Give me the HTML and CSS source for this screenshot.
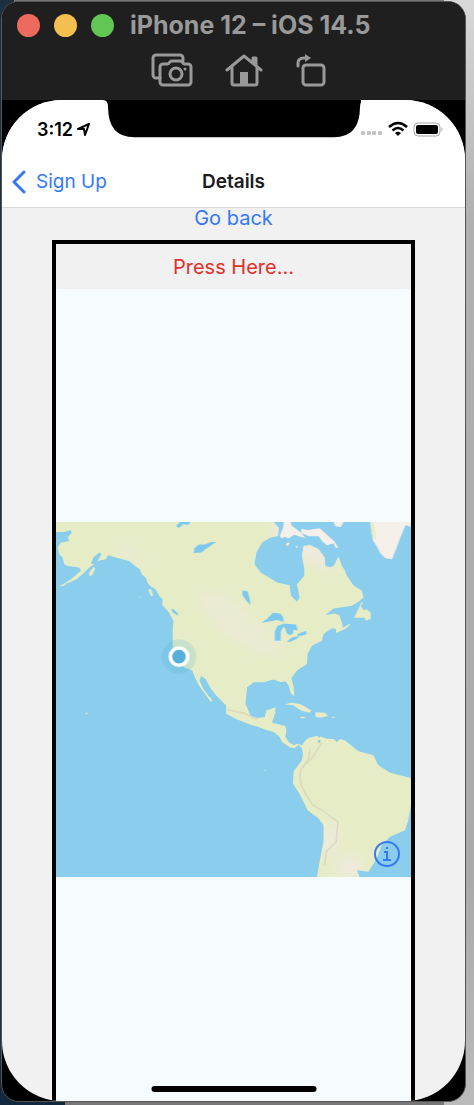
FILE: index.html
```
<!DOCTYPE html>
<html lang="en">
<head>
    <meta charset="UTF-8">
    <meta name="viewport" content="width=device-width, initial-scale=1.0">
    <title>Details</title>
    <link rel="stylesheet" href="styles.css">
</head>
<body>
    <div class="simulator">
        <header class="titlebar">
            <div class="title-row">
                <div class="lights">
                    <button class="light red" aria-label="Close"></button>
                    <button class="light yellow" aria-label="Minimize"></button>
                    <button class="light green" aria-label="Zoom"></button>
                </div>
                <h1>iPhone 12 – iOS 14.5</h1>
            </div>
            <div class="tools">
                <button aria-label="Screenshot">
                    <svg width="40" height="34" viewBox="0 0 40 34">
                        <path d="M8 24H4a3 3 0 0 1-3-3V4a3 3 0 0 1 3-3h24a3 3 0 0 1 3 3v3"/>
                        <path d="M11 10h5l3-3h10l3 3h4a3 3 0 0 1 3 3v15a3 3 0 0 1-3 3H11a3 3 0 0 1-3-3V13a3 3 0 0 1 3-3z"/>
                        <circle cx="24" cy="20" r="6"/>
                        <circle cx="33" cy="15" r="1.5" class="solid"/>
                    </svg>
                </button>
                <button aria-label="Home">
                    <svg width="36" height="34" viewBox="0 0 36 34">
                        <path d="M1 16L18 2l17 14M6 13v16a2 2 0 0 0 2 2h21a2 2 0 0 0 2-2V13M27 9V4h3v7"/>
                        <path d="M14 31V18h8v13z" class="solid"/>
                    </svg>
                </button>
                <button aria-label="Rotate">
                    <svg width="30" height="34" viewBox="0 0 30 34">
                        <rect x="7" y="11" width="21" height="20" rx="3"/>
                        <path d="M2 12V9q0-5 6-5h3"/>
                        <path d="M9 0l6 4-6 4z" class="solid"/>
                    </svg>
                </button>
            </div>
        </header>

        <div class="device">
            <div class="screen">
                <div class="notch">
                    <svg viewBox="0 0 256 38"><path d="M0 0q5 0 5 7 0 30 26 30h198q26 0 26-30 0-7 5-7z"/></svg>
                </div>
                <div class="status">
                    <div class="time">
                        <span>3:12</span>
                        <svg width="13" height="13" viewBox="0 0 13 13"><path d="M1 6L12 1 8 12 7 6z"/></svg>
                    </div>
                    <div class="signals">
                        <svg width="22" height="16" viewBox="0 0 22 16" fill="#c4c4c4">
                            <rect x="0" y="10" width="4" height="4" rx="1"/><rect x="6" y="10" width="4" height="4" rx="1"/>
                            <rect x="11" y="10" width="4" height="4" rx="1"/><rect x="17" y="10" width="4" height="4" rx="1"/>
                        </svg>
                        <svg width="20" height="16" viewBox="0 0 20 16" fill="none" stroke="#000" stroke-width="2.6">
                            <path d="M1 6q9-8 18 0M4.500 9.500q5.500-5 11 0"/>
                            <path d="M7 12q3-2.500 6 0l-3 3z" fill="#000" stroke="none"/>
                        </svg>
                        <svg width="30" height="16" viewBox="0 0 30 16">
                            <rect x="1" y="2" width="26" height="13" rx="4" fill="#fff" stroke="#a5a5a5"/>
                            <rect x="3" y="4" width="22" height="9" rx="2"/>
                            <path d="M28.500 6q2 2.500 0 5z" fill="#a5a5a5"/>
                        </svg>
                    </div>
                </div>
                <nav class="navbar">
                    <a href="#" class="back">
                        <svg width="14" height="24" viewBox="0 0 14 24"><path d="M12 2L2 12l10 10"/></svg>
                        Sign Up
                    </a>
                    <h2>Details</h2>
                </nav>
                <main>
                    <button class="go-back">Go back</button>
                    <section class="card">
                        <button class="press">Press Here...</button>
                        <div class="map-area">
                            <div class="map">
                                <svg viewBox="0 0 1068 1068" role="img" aria-label="Map of the Americas">
                                    <defs>
                                        <filter id="soft" x="-50%" y="-50%" width="200%" height="200%"><feGaussianBlur stdDeviation="18"/></filter>
                                        <clipPath id="land">
                                            <path d="M0 0H655L670 18 668 42 645 47 620 62 603 92 597 127 605 138 616 152 665 182 703 190 707 222 725 240 733 227 725 187 747 162 747 142 740 102 745 72 765 70 790 82 808 107 810 132 824 136 835 132 850 104 860 132 868 144 875 162 895 190 920 207 925 227 910 240 890 252 835 260 810 280 838 275 852 280 860 302 863 318 882 307 886 308 870 322 843 334 842 322 830 320 805 337 800 357 770 372 757 396 755 427 725 447 708 470 715 497 717 522 707 517 700 492 690 479 675 482 655 474 625 482 595 482 575 497 570 547 585 582 605 590 628 587 633 567 660 557 660 572 650 604 690 614 693 627 690 647 700 662 715 672 725 667 740 672 750 657 760 650 787 643 791 650 795 645 815 652 835 653 845 662 855 653 870 657 910 690 955 702 970 732 1005 754 1068 770V852L1060 897 1050 927 1005 947 980 972 965 1012 940 1052 905 1047 913 1068H785L793 1022 805 962 805 912 790 892 757 867 735 822 713 787 715 750 740 717 743 697 739 680 730 671 718 680 705 679 680 662 673 647 655 632 630 625 610 617 585 610 540 592 512 577 512 552 482 522 465 500 450 472 436 463 432 477 442 500 456 520 470 540 465 540 450 520 443 510 430 492 420 472 410 447 385 437 370 412 351 380V327L353 297 340 272 320 250 320 232 310 222 300 202 285 194 275 182 270 168 258 157 252 142 240 134 220 117 200 112 180 107 157 100 150 112 125 117 137 97 130 92 112 107 105 125 115 127 100 137 85 152 62 172 40 182 0 196 20 188 45 172 65 155 75 147 70 137 35 132 25 127 20 107 10 97 5 77 15 62 40 57 35 47 47 32 45 24 25 30H0z"/>
                                        </clipPath>
                                    </defs>
                                    <rect width="1068" height="1068" fill="#8bcdec"/>
                                    <g clip-path="url(#land)">
                                        <rect width="1068" height="1068" fill="#e6edc6"/>
                                        <g fill="#efe9df" filter="url(#soft)">
                                            <path d="M170 90l45-25 50 40-5 35zM420 210l80 0 80 60 90 80 20 60-70-10-100-50-80-80z" opacity=".5"/>
                                            <path d="M655 0h120v70l60 20-10 60-60-30-110-60zM810 900l40 20-10 70-45 30zM850 1010l60-10 20 68h-90z"/>
                                        </g>
                                        <path d="M765 682l-5 30-22 30-5 25 5 25 15 30 20 30 35 20 40 30-5 60-30 30-5 40M800 665l-30 45-30 30M515 565l50 10 40 20" fill="none" stroke="#d5d1ba" stroke-width="5" opacity=".7"/>
                                    </g>
                                    <!-- islands -->
                                    <g fill="#e6edc6">
                                        <path d="M98 155l15-20 5 6-8 18-8 4zM277 202l10 0 5 20-6 2zM338 262l12 7 17 12-2 4-20-9zM455 523l10 5 6 12-8-4zM13 191l13-6 4 3-12 6z"/>
                                        <path d="M920 240l-15 30-8 18 30 0 7 9 10-6 2 7 1-25-12-10-10 2-8-12 6-9z"/>
                                        <path d="M688 549l20-6 30 6 30 18-5 7-25-6-25-17zM780 572l30 2 8 10-22 5-15-2zM734 587l15-1 1 4-12 1zM830 586l10 0 0 3-10 0z"/>
                                        <path d="M710 520l10 2-8 0zM88 575l5-3 2 4-5 2z"/>
                                    </g>
                                    <g fill="#f4f0e9">
                                        <path d="M673 42l10-25 2-17h20l5 12 25 18 16 18-16-4-18-6-18 12-10-6-10 6zM738 20l20 4 35-5 45 40 12 20-10-3-5-12-20 7-15-14-10-14-30 0-22-10zM835 0h30l-8 15-16-2zM691 66l8-5 4 4-8 8zM720 76l5-6 2 8z"/>
                                        <path d="M945 0h123v15l-16-6-15 35-13 35-13 33-20-3-15-14-10-20-13-20-3-20z"/>
                                    </g>
                                    <path d="M945 0l5 35 8 22 4-17-7-40z" fill="#e6edc6"/>
                                    <!-- lakes -->
                                    <g fill="#7cc8ef">
                                        <path d="M361 12l12-12h31l-5 8-17-1-12 11zM415 80l15-12 18 0 18-8h16l-12 8-15 10-18 14-23 1 2-9z"/>
                                        <path d="M561 206l15 2 7 25 2 17-12-12-12-18zM618 303l17-12 18-18 22 2 9 13 1 13-20-6-28 5zM658 357l0-27 8-18 20-6-2 10-8 14 0 27zM684 305l38 3 5 18-12-2-3 12-8 5-10-6-5-16-8-6zM694 359l18-12 22-4-12 10-20 8zM725 338l16-6 12-4v10l-15 4-10 0z"/>
                                        <path d="M345 260l10 4 12 12-1 6-14-10zM788 657l6-2 2 6-6 5z"/>
                                    </g>
                                    <circle cx="254" cy="226" r="2" fill="#e6edc6"/>
                                    <circle cx="628" cy="747" r="2" fill="#e6edc6"/>
                                    <circle cx="370" cy="405" r="52" fill="#55afd9" opacity=".2"/>
                                    <circle cx="370" cy="405" r="26" fill="#55afd9" stroke="#fff" stroke-width="11"/>
                                </svg>
                                <button class="info" aria-label="Map attribution">
                                    <svg width="26" height="26" viewBox="0 0 26 26">
                                        <circle cx="13" cy="13" r="12"/>
                                        <path d="M10 11h3v8M9 19h8M12 7h2"/>
                                    </svg>
                                </button>
                            </div>
                        </div>
                    </section>
                </main>
                <div class="home-bar"></div>
            </div>
        </div>
    </div>
</body>
</html>
```
FILE: styles.css
```
*{
    box-sizing: border-box;
}
body{
    margin: 0;
    min-height: 100vh;
    display: flex;
    padding: 1px 8px 3px 1px;
    font-family: Inter, sans-serif;
    /* desktop behind the simulator window */
    background:
        linear-gradient(#12293d, #12293d) left bottom / 65px 40px no-repeat,
        linear-gradient(#d8d8d8, #b0b0b0 20%, #aaa 80%, #bbb) right top / 30px 100% no-repeat,
        linear-gradient(#1c3040, #1c3040) left top / 14px 100% no-repeat,
        #777;
}
h1, h2{
    margin: 0;
}
button{
    font: inherit;
    border: 0;
    padding: 0;
    background: none;
}
svg{
    display: block;
}
.simulator{
    flex: 1;
    display: flex;
    flex-direction: column;
    border: 1px solid #555;
    border-radius: 18px;
    overflow: hidden;
    background-color: #000;
}

/* window title bar */
.titlebar{
    height: 98px;
    background-color: #1f1f1f;
}
.title-row{
    display: flex;
    align-items: center;
    height: 46px;
    padding-left: 15px;
}
.lights{
    display: flex;
    gap: 14px;
}
.light{
    width: 23px;
    height: 23px;
    border-radius: 50%;
}
.red{
    background-color: #ed6a5f;
}
.yellow{
    background-color: #f5bf4f;
}
.green{
    background-color: #62c654;
}
h1{
    margin-left: 16px;
    font-size: 25px;
    font-weight: 700;
    color: #999;
    white-space: nowrap;
}
.tools{
    display: flex;
    justify-content: center;
    gap: 34px;
    padding: 6px 0 0 10px;
}
.tools svg{
    fill: none;
    stroke: #999;
    stroke-width: 3;
    stroke-linejoin: round;
    stroke-linecap: round;
    overflow: visible;
}
.tools .solid{
    fill: #999;
    stroke: none;
}

/* phone */
.device{
    flex: 1;
    display: flex;
}
.screen{
    position: relative;
    flex: 1;
    display: flex;
    flex-direction: column;
    border-radius: 60px;
    overflow: hidden;
    background-color: #f1f1f1;
}
.notch{
    position: absolute;
    top: 0;
    left: 0;
    right: 0;
    display: flex;
    justify-content: center;
    padding-right: 4px;
}
.notch svg{
    width: 258px;
}
.status{
    display: flex;
    justify-content: space-between;
    height: 56px;
    padding: 18px 22px 0 35px;
    background-color: #fff;
}
.time, .signals{
    display: flex;
    align-items: center;
    height: 22px;
}
.time{
    gap: 4px;
    font-size: 18px;
    font-weight: 600;
}
.time svg{
    fill: none;
    stroke: #000;
    stroke-width: 2;
    stroke-linejoin: round;
}
.signals{
    gap: 5px;
}
.navbar{
    display: grid;
    grid-template-columns: 1fr auto 1fr;
    align-items: center;
    height: 52px;
    padding: 0 10px;
    background-color: #fff;
    border-bottom: 1px solid #d9d9d9;
}
.back{
    display: flex;
    align-items: center;
    gap: 10px;
    font-size: 19px;
    color: #3478f6;
    text-decoration: none;
}
.back svg{
    fill: none;
    stroke: #3478f6;
    stroke-width: 3;
    stroke-linecap: round;
    stroke-linejoin: round;
}
h2{
    font-size: 19px;
    font-weight: 600;
    color: #1c1c1e;
}
main{
    flex: 1;
    display: flex;
    flex-direction: column;
    align-items: center;
}
.go-back{
    height: 21px;
    margin-bottom: 11px;
    font-size: 20px;
    line-height: 21px;
    color: #3478f6;
}
.card{
    flex: 1;
    display: flex;
    flex-direction: column;
    width: 363px;
    max-width: 79%;
    border: 4px solid #000;
    border-bottom: 0;
}
.press{
    height: 45px;
    font-size: 20px;
    color: #e0302a;
}
.map-area{
    flex: 1;
    display: flex;
    align-items: center;
    padding-top: 9px;
    background-color: #f6fbff;
}
.map{
    position: relative;
    width: 100%;
}
.info{
    position: absolute;
    right: 11px;
    bottom: 10px;
}
.info svg{
    fill: none;
    stroke: #3478f6;
    stroke-width: 2;
}
.home-bar{
    position: absolute;
    bottom: 9px;
    left: 50%;
    width: 165px;
    height: 6px;
    transform: translateX(-50%);
    border-radius: 3px;
    background-color: #000;
}
```
